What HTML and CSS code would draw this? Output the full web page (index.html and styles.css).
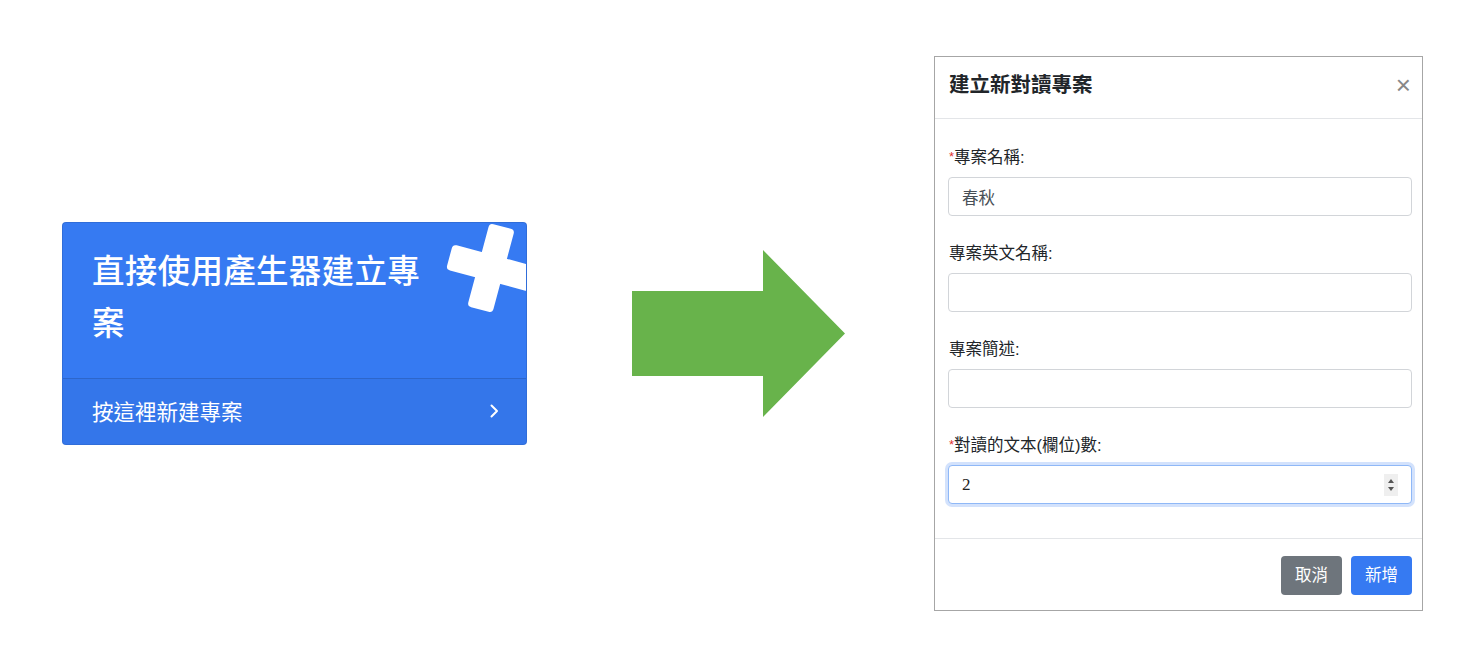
FILE: index.html
```html
<!DOCTYPE html>
<html lang="zh-Hant">
<head>
<meta charset="utf-8">
<title>建立新對讀專案</title>
<link rel="stylesheet" href="styles.css">
</head>
<body>
<main class="stage">
  <section class="card">
    <div class="card-head">
      <h3 class="card-title">直接使用產生器建立專案</h3>
      <svg class="card-plus" width="110" height="110" viewBox="0 0 110 110" aria-hidden="true">
        <g transform="rotate(15 55 55)" fill="#fff">
          <rect x="42" y="12" width="26" height="86" rx="4"/>
          <rect x="12" y="42" width="86" height="26" rx="4"/>
        </g>
      </svg>
    </div>
    <a class="card-foot" href="#">
      <span>按這裡新建專案</span>
      <svg class="chev" width="12" height="16" viewBox="0 0 12 16" aria-hidden="true">
        <path d="M3.5 2.5 L9 8 L3.5 13.5" fill="none" stroke="#fff" stroke-width="2" stroke-linecap="round" stroke-linejoin="round"/>
      </svg>
    </a>
  </section>

  <svg class="arrow" width="213" height="167" viewBox="0 0 213 167" aria-hidden="true">
    <polygon points="0,41 131,41 131,0 213,83.5 131,167 131,126 0,126" fill="#68b34b"/>
  </svg>

  <section class="modal">
    <header class="modal-head">
      <h5 class="modal-title">建立新對讀專案</h5>
      <span class="close">×</span>
    </header>
    <div class="modal-body">
      <div class="group">
        <label class="lbl"><span class="req">*</span>專案名稱:</label>
        <input class="ctrl" type="text" value="春秋">
      </div>
      <div class="group">
        <label class="lbl">專案英文名稱:</label>
        <input class="ctrl" type="text" value="">
      </div>
      <div class="group">
        <label class="lbl">專案簡述:</label>
        <input class="ctrl" type="text" value="">
      </div>
      <div class="group">
        <label class="lbl"><span class="req">*</span>對讀的文本(欄位)數:</label>
        <div class="num-wrap">
          <input class="ctrl ctrl-focus num" type="text" value="2">
          <span class="spin"><i class="up"></i><i class="down"></i></span>
        </div>
      </div>
    </div>
    <footer class="modal-foot">
      <button class="btn btn-gray">取消</button>
      <button class="btn btn-blue">新增</button>
    </footer>
  </section>
</main>
</body>
</html>
```

FILE: styles.css
```css
* { box-sizing: border-box; }

html, body {
  margin: 0;
  padding: 0;
  background: #fff;
}

body {
  font-family: "Liberation Sans", "Noto Sans CJK TC", sans-serif;
  color: #212529;
}

.stage {
  height: 656px;
  padding: 11px 0 0 62px;
  display: flex;
  align-items: center;
}

/* ---------- card ---------- */
.card {
  width: 465px;
  height: 223px;
  background: #367af2;
  border: 1px solid rgba(0, 0, 0, 0.1);
  border-radius: 4px;
  overflow: hidden;
  display: flex;
  flex-direction: column;
  position: relative;
  flex: none;
}

.card-head {
  position: relative;
  height: 155px;
  padding: 23px 30px 0 29px;
}

.card-title {
  margin: 0;
  width: 350px;
  color: #fff;
  font-size: 32.5px;
  font-weight: 500;
  line-height: 52px;
  letter-spacing: 0.3px;
}

.card-plus {
  position: absolute;
  top: -10px;
  right: -20px;
}

.card-foot {
  flex: 1;
  display: flex;
  align-items: center;
  justify-content: space-between;
  padding: 0 26px 2px 29px;
  background: rgba(0, 0, 0, 0.03);
  border-top: 1px solid rgba(0, 0, 0, 0.13);
  color: #fff;
  text-decoration: none;
  font-size: 21.5px;
}

.chev { display: block; }

/* ---------- arrow ---------- */
.arrow {
  flex: none;
  margin-left: 105px;
  display: block;
}

/* ---------- modal ---------- */
.modal {
  flex: none;
  margin-left: 89px;
  width: 489px;
  height: 555px;
  border: 1px solid #a6a6a6;
  background: #fff;
  display: flex;
  flex-direction: column;
}

.modal-head {
  height: 62px;
  display: flex;
  align-items: center;
  justify-content: space-between;
  padding: 0 10px 6px 14px;
  border-bottom: 1px solid #e3e5e8;
}

.modal-title {
  margin: 0;
  font-size: 20.5px;
  font-weight: 700;
  line-height: 30px;
}

.close {
  font-size: 26px;
  line-height: 26px;
  color: #888;
  font-weight: 400;
  padding-right: 1px;
}

.modal-body {
  flex: 1;
  padding: 26px 10px 0 13px;
}

.group {
  margin-bottom: 25px;
}

.lbl {
  display: block;
  font-size: 16.5px;
  line-height: 24px;
  margin-bottom: 8px;
  margin-left: 1px;
}

.req {
  color: #e0322f;
  font-size: 13px;
  vertical-align: 2px;
}

.ctrl {
  display: block;
  width: 100%;
  height: 39px;
  padding: 0 13px;
  border: 1px solid #d2d5d9;
  border-radius: 4px;
  font-family: "Liberation Sans", "Noto Sans CJK TC", sans-serif;
  font-size: 16.5px;
  color: #495057;
  background: #fff;
  outline: none;
}

.num-wrap { position: relative; }

.ctrl-focus {
  border-color: #8fb8f7;
  box-shadow: 0 0 0 3px rgba(54, 122, 242, 0.22);
}

.ctrl.num {
  font-family: "Liberation Serif", "Times New Roman", serif;
  font-size: 17px;
  color: #222;
}

.spin {
  position: absolute;
  top: 9px;
  right: 14px;
  width: 14px;
  height: 22px;
  background: #efefef;
  display: flex;
  flex-direction: column;
  align-items: center;
  justify-content: center;
  gap: 4px;
}

.spin i {
  display: block;
  width: 0;
  height: 0;
  border-left: 3.5px solid transparent;
  border-right: 3.5px solid transparent;
}

.spin .up { border-bottom: 4px solid #555; }
.spin .down { border-top: 4px solid #555; }

.modal-foot {
  height: 72px;
  border-top: 1px solid #e3e5e8;
  display: flex;
  align-items: center;
  justify-content: flex-end;
  gap: 9px;
  padding: 2px 10px 0 0;
}

.btn {
  height: 39px;
  padding: 0 14px;
  border: none;
  border-radius: 4px;
  color: #fff;
  font-family: "Liberation Sans", "Noto Sans CJK TC", sans-serif;
  font-size: 16.5px;
  line-height: 39px;
}

.btn-gray { background: #6e757c; }
.btn-blue { background: #367af2; }
```
